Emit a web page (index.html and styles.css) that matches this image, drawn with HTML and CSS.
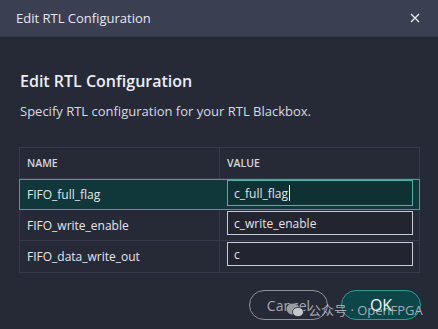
FILE: index.html
```html
<!DOCTYPE html>
<html lang="en">

  <head>
    <meta charset="UTF-8">
    <meta name="viewport" content="width=device-width, initial-scale=1.0">
    <title>Edit RTL Configuration</title>
    <link rel="stylesheet" href="styles.css">
  </head>

  <body>

    <div class="dialog">
      <header class="titlebar">
        <span class="title">Edit RTL Configuration</span>
        <svg class="close" width="10" height="10" viewBox="0 0 10 10">
          <path d="M1 1 L9 9 M9 1 L1 9" stroke="#e6e8ee" stroke-width="1.4" fill="none"/>
        </svg>
      </header>

      <div class="content">
        <h2>Edit RTL Configuration</h2>
        <p class="desc">Specify RTL configuration for your RTL Blackbox.</p>

        <div class="table">
          <div class="row head">
            <div class="cell name">NAME</div>
            <div class="cell value">VALUE</div>
          </div>
          <div class="row selected">
            <div class="cell name">FIFO_full_flag</div>
            <div class="cell value"><div class="input focus">c_full_flag<span class="caret"></span></div></div>
          </div>
          <div class="row">
            <div class="cell name">FIFO_write_enable</div>
            <div class="cell value"><div class="input">c_write_enable</div></div>
          </div>
          <div class="row last">
            <div class="cell name">FIFO_data_write_out</div>
            <div class="cell value"><div class="input">c</div></div>
          </div>
        </div>

        <div class="actions">
          <button class="btn cancel">Cancel</button>
          <button class="btn ok">OK</button>
        </div>
      </div>

      <!-- watermark laid over the buttons -->
      <div class="watermark">
        <svg width="18" height="14" viewBox="0 0 18 14">
          <ellipse cx="7" cy="6" rx="6.5" ry="5.5" fill="#9a9ca4"/>
          <ellipse cx="12" cy="9" rx="5.5" ry="4.6" fill="#c4c6cc" stroke="#262a37" stroke-width="0.8"/>
        </svg>
        <span>公众号 · OpenFPGA</span>
      </div>
    </div>

  </body>

</html>
```

FILE: styles.css
```css
body {
  margin: 0;
  padding: 0;
  background-color: #262a37;
  font-family: 'Open Sans', 'Noto Sans', 'Noto Sans CJK SC', sans-serif;
  color: #e8e9ee;
}

.dialog {
  position: relative;
  width: 438px;
  height: 329px;
  background-color: #262a37;
  overflow: hidden;
}

.titlebar {
  height: 37px;
  padding: 0 18px 0 16px;
  display: flex;
  align-items: center;
  justify-content: space-between;
  background-color: #3a3f51;
  border-bottom: 1px solid #33384a;
  box-sizing: border-box;
}

.title {
  font-size: 13px;
  color: #e6e8ee;
}

.content {
  padding: 0 18px 0 19px;
}

h2 {
  margin: 33px 0 0 1px;
  font-size: 16px;
  font-weight: 600;
  color: #eceef2;
}

.desc {
  margin: 10px 0 0 1px;
  font-size: 13px;
  color: #d8dae2;
}

.table {
  margin-top: 27px;
  width: 401px;
  border: 1px solid #363a48;
  box-sizing: border-box;
}

.row {
  display: flex;
  height: 31px;
  border-bottom: 1px solid #363a48;
  box-sizing: border-box;
}

.row.last {
  border-bottom: none;
}

.cell {
  display: flex;
  align-items: center;
  box-sizing: border-box;
}

.cell.name {
  width: 200px;
  padding-left: 7px;
  font-size: 12px;
  color: #e4e6ec;
  border-right: 1px solid #363a48;
}

.cell.value {
  flex: 1;
  padding: 0 6px 0 7px;
  align-items: flex-start;
  padding-top: 1px;
}

.head .cell {
  font-size: 10.5px;
  font-weight: 600;
  color: #d4d6de;
  align-items: center;
  padding-top: 0;
}

.row.selected {
  background-color: #10383a;
  border: 1px solid #3aa59a;
  margin: 0 -1px;
}

.row.selected .cell.name {
  border-right: none;
}

.input {
  width: 100%;
  height: 24px;
  padding-left: 6px;
  display: flex;
  align-items: center;
  font-size: 12px;
  color: #e2e4ea;
  background-color: #22252f;
  border: 1px solid #c9ccd6;
  box-sizing: border-box;
}

.input.focus {
  height: 26px;
  margin-top: -1px;
  background-color: #0f3133;
  border-color: #4fb3a6;
}

.caret {
  width: 1px;
  height: 16px;
  margin-left: 1px;
  background-color: #f0f0f0;
}

.actions {
  display: flex;
  justify-content: flex-end;
  gap: 13px;
  margin-top: 17px;
  width: 402px;
}

.btn {
  height: 30px;
  border-radius: 15px;
  font-family: inherit;
  cursor: pointer;
}

.cancel {
  width: 79px;
  background-color: transparent;
  border: 1px solid #8e919c;
  color: #a4a7b1;
  font-size: 14px;
}

.ok {
  width: 80px;
  background-color: #0d4649;
  border: 1px solid #2a9c93;
  color: #f2f4f6;
  font-size: 16px;
}

.watermark {
  position: absolute;
  left: 286px;
  top: 300px;
  display: flex;
  align-items: center;
  gap: 4px;
  font-size: 13px;
  color: rgba(220, 222, 228, 0.7);
}
```
